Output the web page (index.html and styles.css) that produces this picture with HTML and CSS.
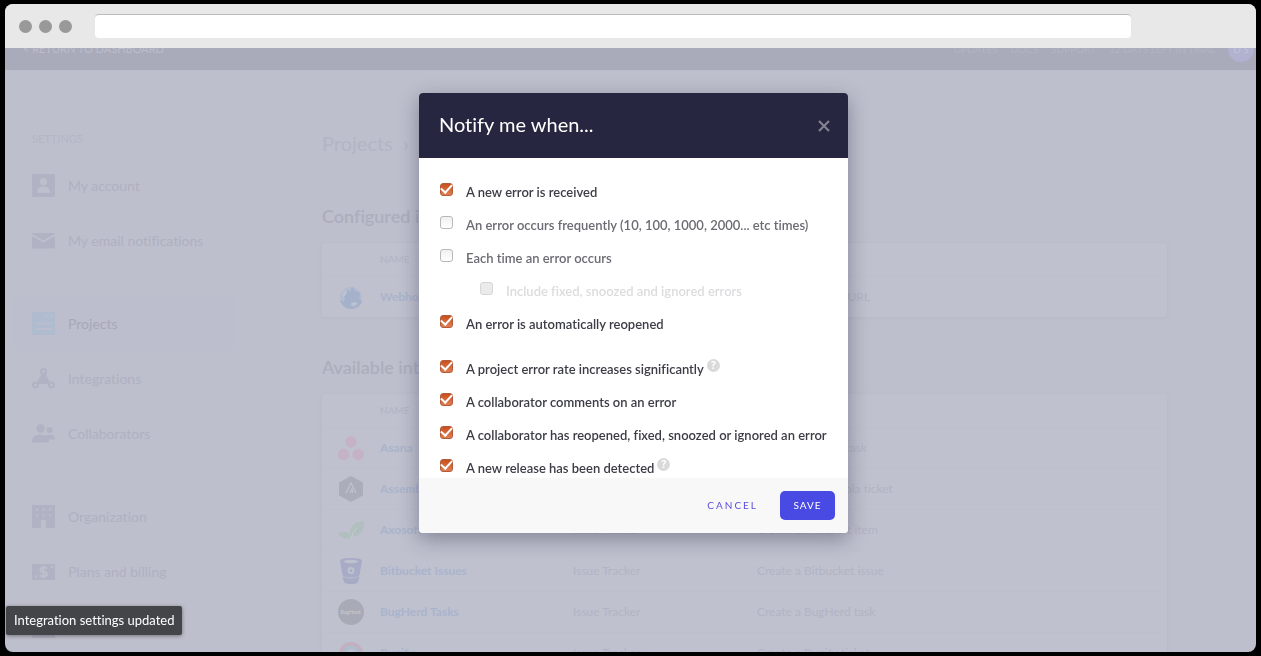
FILE: index.html
```html
<!DOCTYPE html>
<html lang="en">
<head>
<meta charset="utf-8">
<title>Projects - Settings</title>
<link rel="stylesheet" href="styles.css">
</head>
<body>
<div class="window">
  <header class="chrome">
    <span class="dot"></span><span class="dot"></span><span class="dot"></span>
    <input class="address" type="text" aria-label="Address">
  </header>
  <div class="viewport">
    <div class="page">
      <nav class="topnav">
        <a class="back" href="#">&lt; RETURN TO DASHBOARD</a>
        <a href="#">UPDATES</a>
        <a href="#">DOCS</a>
        <a href="#">SUPPORT</a>
        <a href="#">12 DAYS LEFT IN TRIAL</a>
        <span class="avatar">D S</span>
      </nav>
      <div class="columns">
        <aside class="sidebar">
          <h2 class="side-title">SETTINGS</h2>
          <div class="side-group">
            <a class="side-item" href="#"><svg class="side-icon" viewBox="0 0 23 23"><path fill-rule="evenodd" d="M1 0h21q1 0 1 1v21q0 1-1 1H1q-1 0-1-1V1Q0 0 1 0zM11.500 4a3.700 3.700 0 1 0 .01 0zM5 19h13q0-6.500-6.500-6.500T5 19z"/></svg>My account</a>
            <a class="side-item" href="#"><svg class="side-icon" viewBox="0 0 23 23"><path d="M0 4h23v1L11.500 11.500 0 5zM0 7l11.500 6.500L23 7v12.500H0z"/></svg>My email notifications</a>
          </div>
          <div class="side-group">
            <a class="side-item active" href="#"><svg class="side-icon" viewBox="0 0 23 23"><path fill-rule="evenodd" d="M1 0h21q1 0 1 1v21q0 1-1 1H1q-1 0-1-1V1Q0 0 1 0zM13 3.500v2h2v-2zM18 3.500v2h2v-2zM4 10.500v2h16v-2zM4 16v2h16v-2z"/></svg>Projects</a>
            <a class="side-item" href="#"><svg class="side-icon" viewBox="0 0 23 23"><path d="M10 6h3l6 11h-3H7H4z"/><g class="ring"><circle cx="11.500" cy="4.500" r="2.500"/><circle cx="3.500" cy="18" r="2.500"/><circle cx="19.500" cy="18" r="2.500"/></g></svg>Integrations</a>
            <a class="side-item" href="#"><svg class="side-icon" viewBox="0 0 23 23"><circle cx="8.500" cy="6.500" r="4.200"/><circle cx="17.500" cy="8" r="3"/><path d="M0 20.500q0-8 8.500-8 3 0 5 1.500 2-1.500 4-1.500 5.500 0 5.500 5h-6v3z"/></svg>Collaborators</a>
          </div>
          <div class="side-group">
            <a class="side-item" href="#"><svg class="side-icon" viewBox="0 0 23 23"><path fill-rule="evenodd" d="M0 0h23v23h-9v-8H9v8H0zM4 3.500v2h2v-2zM10.500 3.500v2h2v-2zM17 3.500v2h2v-2zM4 9.500v2h2v-2zM10.500 9.500v2h2v-2zM17 9.500v2h2v-2z"/></svg>Organization</a>
            <a class="side-item" href="#"><svg class="side-icon" viewBox="0 0 23 23"><path fill-rule="evenodd" d="M0 4h23v16H0zM3 15.500v2h2v-2zM19 6v2h2V6z"/><path class="cut" d="M15 8.500Q14 7.500 11.500 7.500 8.500 7.500 8.500 9.700 8.500 11.500 11.500 12 15 12.500 15 14.500 15 16.500 11.500 16.500 9 16.500 8 15.500M11.500 5.500v13"/></svg>Plans and billing</a>
            <a class="side-item" href="#"><svg class="side-icon" viewBox="0 0 23 23"><path fill-rule="evenodd" d="M0 0h23v23H0zM4 12v7h2.500v-7zM10 6v13h2.500V6zM16 14v5h2.500v-5z"/></svg>Event usage</a>
          </div>
        </aside>
        <main class="main">
          <h1 class="crumbs">Projects <span>›</span></h1>
          <h2 class="section-title">Configured integrations</h2>
          <table class="card">
            <thead><tr><th class="c-icon"></th><th class="c-name">NAME</th><th class="c-type">TYPE</th><th>ACTION</th></tr></thead>
            <tbody>
              <tr><td><svg class="logo" viewBox="0 0 26 26"><circle cx="13" cy="14" r="11" fill="#b2bccf"/><path fill="#a5b0ca" d="M3 10q3 1 5-1l1-4 3 3 2-6 3 5 5 2-1 5 3 4q-3 6-10 7Q5 25 2 16l4 2 1-4z"/><path fill="#bbc3d3" d="M4 10q2-3 5-4l-1 5-3 2zM12 20l4-2 4 1-4 4z"/></svg></td><td><a href="#">Webhook</a></td><td>Data</td><td>POST errors to a URL</td></tr>
            </tbody>
          </table>
          <h2 class="section-title">Available integrations</h2>
          <table class="card">
            <thead><tr><th class="c-icon"></th><th class="c-name">NAME</th><th class="c-type">TYPE</th><th>ACTION</th></tr></thead>
            <tbody>
              <tr><td><svg class="logo" viewBox="0 0 26 26" fill="#c5b2c5"><circle cx="13" cy="7" r="5.700"/><circle cx="5.700" cy="19.500" r="5.700"/><circle cx="20.300" cy="19.500" r="5.700"/></svg></td><td><a href="#">Asana</a></td><td>Issue Tracker</td><td>Create an Asana task</td></tr>
              <tr><td><svg class="logo" viewBox="0 0 26 26"><path fill="#abadbb" d="M13 0l12 6.500v13L13 26 1 19.500v-13z"/><path fill="none" stroke="#bfc1ce" stroke-width="1.300" d="M8 17l5-10 5 10M12 17l2-4 1 4"/></svg></td><td><a href="#">Assembla</a></td><td>Issue Tracker</td><td>Create an Assembla ticket</td></tr>
              <tr><td><svg class="logo" viewBox="0 0 26 26" fill="#b2bfbf"><path d="M12 19Q11 5 26 4q0 15-12 16zM0 16q8-4 12 2l1 3Q5 24 0 16z"/><path fill="none" stroke="#c3cbce" d="M13 22q1-7 6-11"/></svg></td><td><a href="#">Axosoft</a></td><td>Issue Tracker</td><td>Create an Axosoft item</td></tr>
              <tr><td><svg class="logo" viewBox="0 0 26 26" fill="#a7abc6"><path d="M2 3q0-3 11-3t11 3l-2.500 14q-1 2.500-8.500 2.500T4.500 17z"/><path d="M4.500 18.500q8.500 4 17 0L20 24q-1 2-7 2t-7-2z"/><ellipse cx="13" cy="3.500" rx="7" ry="1.700" fill="#bfc1ce"/><circle cx="13" cy="12.500" r="2.500" fill="none" stroke="#bfc1ce" stroke-width="2"/></svg></td><td><a href="#">Bitbucket Issues</a></td><td>Issue Tracker</td><td>Create a Bitbucket issue</td></tr>
              <tr><td><svg class="logo" viewBox="0 0 26 26"><circle cx="13" cy="13" r="13" fill="#a8aab5"/><text class="logo-text" x="13" y="15" text-anchor="middle">BugHerd.</text></svg></td><td><a href="#">BugHerd Tasks</a></td><td>Issue Tracker</td><td>Create a BugHerd task</td></tr>
              <tr><td><svg class="logo" viewBox="0 0 26 26"><circle cx="13" cy="14" r="12" fill="#c2afbf"/><circle cx="13" cy="14" r="8.500" fill="#aebdce"/><circle cx="13" cy="14" r="5" fill="#bfc1ce"/></svg></td><td><a href="#">Bugify</a></td><td>Issue Tracker</td><td>Create a Bugify ticket</td></tr>
            </tbody>
          </table>
        </main>
      </div>
    </div>
  </div>
</div>

<div class="overlay">
  <form class="modal" role="dialog" aria-labelledby="modal-title">
    <div class="modal-head">
      <h2 id="modal-title">Notify me when...</h2>
      <button class="close" type="button" aria-label="Close"><svg viewBox="0 0 12 12"><path d="M1 1l10 10M11 1L1 11"/></svg></button>
    </div>
    <div class="modal-body">
      <div class="options">
        <label class="option"><input type="checkbox" checked><span>A new error is received</span></label>
        <label class="option"><input type="checkbox"><span>An error occurs frequently (10, 100, 1000, 2000... etc times)</span></label>
        <label class="option"><input type="checkbox"><span>Each time an error occurs</span></label>
        <label class="option nested"><input type="checkbox" disabled><span>Include fixed, snoozed and ignored errors</span></label>
        <label class="option"><input type="checkbox" checked><span>An error is automatically reopened</span></label>
      </div>
      <div class="options">
        <label class="option"><input type="checkbox" checked><span>A project error rate increases significantly</span><i class="help">?</i></label>
        <label class="option"><input type="checkbox" checked><span>A collaborator comments on an error</span></label>
        <label class="option"><input type="checkbox" checked><span>A collaborator has reopened, fixed, snoozed or ignored an error</span></label>
        <label class="option"><input type="checkbox" checked><span>A new release has been detected</span><i class="help">?</i></label>
      </div>
    </div>
    <div class="modal-foot">
      <button class="btn" type="button">CANCEL</button>
      <button class="btn primary" type="submit">SAVE</button>
    </div>
  </form>
</div>
<div class="toast" role="status">Integration settings updated</div>
</body>
</html>
```
FILE: styles.css
```css
* { box-sizing: border-box; }
body {
  margin: 0;
  padding: 4px 5px;
  height: 100vh;
  overflow: hidden;
  background: #000;
  font: 13px/20px Lato, "Open Sans", sans-serif;
  font-variant-ligatures: none;
}
h1, h2 { margin: 0; font-weight: 400; }
a { color: inherit; text-decoration: none; }

.window {
  height: 100%;
  display: flex;
  flex-direction: column;
  border-radius: 8px;
  overflow: hidden;
  background: #bdbfcc;
}
.chrome {
  flex: none;
  height: 44px;
  padding-left: 14px;
  display: flex;
  align-items: center;
  gap: 7px;
  background: #e8e8e8;
}
.dot { width: 13px; height: 13px; border-radius: 50%; background: #999; }
.address {
  flex: 1;
  height: 24px;
  margin: 0 125px 0 16px;
  border: 0;
  border-top: 1px solid #bbb;
  border-radius: 4px;
  background: #fff;
}
.viewport { flex: 1; min-height: 0; overflow: hidden; }
/* the page is scrolled down slightly */
.page { margin-top: -20px; }

.topnav {
  height: 42px;
  padding: 0 2px 0 18px;
  display: flex;
  align-items: center;
  gap: 13px;
  background: #a9abba;
  color: #b2b4c2;
  font-size: 10px;
}
.back { margin-right: auto; color: #bbbdca; font-size: 11px; }
.avatar {
  width: 26px;
  height: 26px;
  border-radius: 50%;
  background: #b1b1d0;
  color: #c3c3da;
  text-align: center;
  line-height: 26px;
}

.columns { display: flex; }
.sidebar { flex: none; width: 229px; padding: 59px 0 0 9px; }
.side-title { padding-left: 18px; font-size: 11px; line-height: 20px; color: #b4b6c5; }
.side-group { margin-bottom: 28px; }
.side-title + .side-group { margin-top: 9px; }
.side-item {
  height: 55px;
  padding-left: 18px;
  display: flex;
  align-items: center;
  gap: 13px;
  border-radius: 4px;
  color: #afb1c1;
  font-size: 14px;
}
.side-icon { width: 23px; height: 23px; fill: #b1b3c4; }
.side-item.active { background: #bcbecd; color: #a6a8b8; }
.active .side-icon { fill: #afbccf; }
.ring { fill: #bdbfcc; stroke: #b1b3c4; stroke-width: 2; }
.cut { fill: none; stroke: #bdbfcc; stroke-width: 2; }

.main { flex: 1; padding: 57px 89px 0 88px; color: #b2b4c3; }
.crumbs { font-size: 20px; line-height: 32px; color: #b3b5c4; }
.crumbs span { margin-left: 5px; }
.section-title { padding: 38px 0 15px; font-size: 18px; line-height: 24px; font-weight: 600; color: #acaebd; }
.crumbs + .section-title { padding-top: 45px; }
.card {
  width: 100%;
  table-layout: fixed;
  border-collapse: collapse;
  border-radius: 3px;
  background: #bfc1ce;
  box-shadow: 0 1px 4px #b7b9c7;
  font-size: 12px;
}
.card th { height: 33px; padding: 0; text-align: left; font-size: 10px; font-weight: 400; line-height: 20px; }
.card td { height: 41px; padding: 0; border-top: 1px solid #bdbfcc; }
.card td:first-child { padding-left: 16px; }
.card a { color: #a9b4cd; font-weight: 700; }
.c-icon { width: 58px; }
.c-name { width: 193px; }
.c-type { width: 184px; }
.logo { display: block; width: 26px; height: 26px; }
.logo-text { fill: #c4c6cf; font: 700 5px Lato, sans-serif; }

.overlay {
  position: fixed;
  inset: 0 0 0 6px;
  display: flex;
  justify-content: center;
  align-items: flex-start;
  padding-top: 93px;
}
.modal {
  width: 429px;
  border-radius: 4px;
  overflow: hidden;
  background: #fff;
  box-shadow: 0 6px 20px rgba(40, 40, 70, .4);
}
.modal-head {
  height: 65px;
  padding: 0 18px 4px 20px;
  display: flex;
  align-items: center;
  justify-content: space-between;
  background: #272640;
  color: #fff;
}
.modal-head h2 { font-size: 20px; line-height: 28px; }
.close { padding: 5px 0 0; border: 0; background: none; }
.close svg { display: block; width: 12px; height: 12px; fill: none; stroke: #858494; stroke-width: 2; }
.modal-body { height: 320px; padding: 17px 20px 0; overflow: hidden; }
.options { margin-bottom: 12px; }
.option {
  height: 33px;
  display: flex;
  align-items: center;
  color: #6b6b73;
  font-weight: 600;
  white-space: nowrap;
}
.option input {
  appearance: none;
  flex: none;
  width: 13px;
  height: 13px;
  margin: 0 13px 4px 1px;
  border: 1px solid #b8b8b8;
  border-radius: 3px;
  background: linear-gradient(#f0f0f0, #fff);
}
.option input:checked {
  display: grid;
  place-items: center;
  border-color: #b25a39;
  background: linear-gradient(#c9501f, #e07e52);
}
.option input:checked::before {
  content: "";
  width: 9px;
  height: 5px;
  margin-bottom: 4px;
  border: solid #fff;
  border-width: 0 0 2px 2px;
  transform: rotate(-47deg);
}
.option input:checked + span { color: #3c3c46; }
.option.nested { padding-left: 40px; color: #dcdcde; }
.option input:disabled { border-color: #d6d6d6; background: #ebebeb; }
.help {
  width: 13px;
  height: 13px;
  margin: 0 0 6px 3px;
  border-radius: 50%;
  background: #dadada;
  color: #fff;
  font: 700 10px/13px "Open Sans", sans-serif;
  text-align: center;
}
.modal-foot {
  height: 55px;
  padding: 0 13px;
  display: flex;
  align-items: center;
  justify-content: flex-end;
  gap: 10px;
  background: #f8f8f8;
}
.btn {
  height: 29px;
  padding: 0 12px;
  border: 0;
  border-radius: 5px;
  background: none;
  color: #5b4ee0;
  font: 10px/29px Lato, sans-serif;
  letter-spacing: 2px;
}
.primary { min-width: 55px; background: #4949e4; color: #fff; letter-spacing: 1px; }

.toast {
  position: fixed;
  left: 6px;
  bottom: 21px;
  padding: 4px 7px 5px 8px;
  border-radius: 2px;
  background: #444549;
  box-shadow: 0 1px 4px rgba(0, 0, 0, .4);
  color: #fff;
}
```
